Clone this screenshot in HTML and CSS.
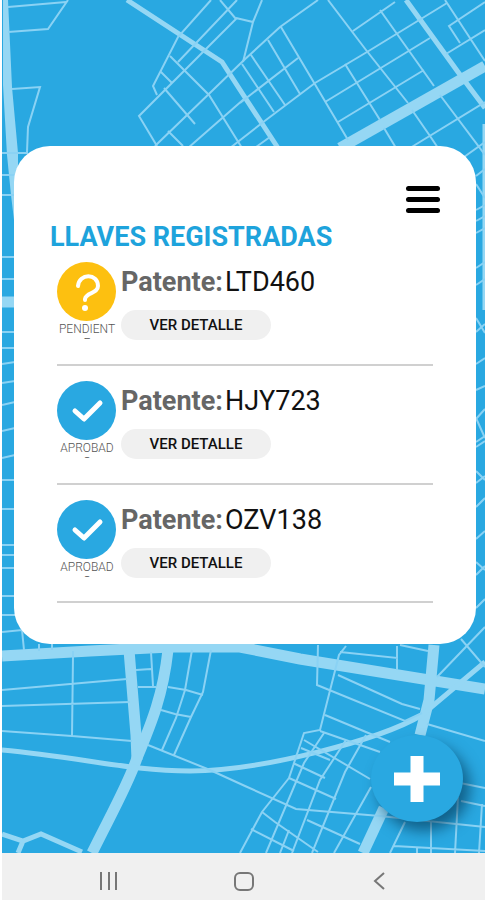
FILE: index.html
```html
<!DOCTYPE html>
<html lang="es">
<head>
  <meta charset="UTF-8">
  <meta name="viewport" content="width=device-width, initial-scale=1.0">
  <title>Llaves registradas</title>
  <link rel="stylesheet" href="styles.css">
</head>
<body>

<main class="screen">
  <svg class="map" viewBox="2 0 483 853" preserveAspectRatio="xMidYMid slice" aria-hidden="true">
    <path class="road-fill" d="M3 0H8L12 87L18 153V240L14 220L11 195L7 155L3 85Z"/>
    <!-- avenues -->
    <g class="avenue">
      <path d="M340 148L485 66"/>
      <path d="M2 656L90 651L170 647L240 647L300 659L485 689"/>
      <path d="M129 650L136 735L137 760"/>
      <path d="M168 650C163 695 152 722 137 758C128 785 108 820 92 853"/>
      <path d="M434 645L429 700L420 735"/>
      <path d="M384 808L363 853"/>
      <path d="M2 302H16"/>
    </g>
    <!-- main streets -->
    <g class="main-street">
      <path d="M127 0L222 62L244 96L278 148"/>
      <path d="M406 0L458 72L485 108"/>
      <path d="M2 750C80 757 130 771 190 771C260 771 380 740 422 715L485 662"/>
      <path d="M2 834L23 841L41 834L82 852M23 841L18 853"/>
      <path d="M485 124V310"/>
    </g>
    <!-- streets -->
    <g class="street">
      <path d="M8 7L66 2M68 0L48 29L8 32M12 89L40 87L28 127L27 152M2 153H28"/>
      <path d="M2 175H15M2 195H15M2 257H15M2 279H15M2 332H15M2 348H15M2 364L15 362M2 383L15 381M2 405L15 402M2 431L15 428M2 458L15 455M2 480H15M2 509H15M2 545H15M2 555H15M2 568H15M2 596H15M2 615H15"/>
      <path d="M211 0L178 37L153 86L157 95M237 0L178 62M220 0L236 19L139 116L157 146M170 56L209 95L242 148M161 72L172 83M164 88L195 124M236 18L253 22L262 0M253 22L243 62"/>
      <path d="M318 0L280 27L243 61L155 146M168 131L183 146M242 64L274 112M251 55L285 105M268 40L300 94M281 27L348 140M244 99L188 148M230 148L262 123L315 83L367 52L447 3M240 103L298 58"/>
      <path d="M256 147L270 137"/>
      <path d="M328 0L366 50L408 103M353 31L395 2M380 10L434 86M345 64L380 120M325 102L430 38M338 122L424 70M445 0L485 61M485 2L449 26L460 43M446 54L485 30"/>
      <path d="M412 110L430 136L438 148M440 95L485 155M384 128L396 148M485 102L410 148M464 157L485 142"/>
      <path d="M476 176L485 169M476 184L485 198M476 210L485 205M476 221L485 216M476 233L485 228M476 268L485 262M476 285L485 279M476 318L485 333M476 332L485 324M476 364L485 358M476 390L485 386M476 419L485 409M476 418L485 438M476 442L485 436M476 447L485 441M476 471L485 480M476 483L485 476M476 507L485 498M476 539L485 531M476 562L485 570M476 575L485 566M476 608L485 599"/>
      <path d="M2 632L22 630L24 650M39 644V651M52 644V650M73 651V656M73 656L72 736M2 690L127 679M2 706L130 702M2 731L72 736L132 741M2 632"/>
      <path d="M151 652L153 686M136 670L151 669M138 687H156M192 650L185 690L176 718L162 750M211 650L203 692L191 717L174 755M168 687L186 690L203 695M161 710L175 714L191 717M148 745L210 770L245 786L296 809L380 816L485 827"/>
      <path d="M318 645L317 685L405 721L422 713M346 646L339 655L320 730L304 733L289 778M340 652L397 658V646M397 658V670M338 675L402 704L420 709M325 715L390 742M320 731L380 752M304 740L370 779M301 748L330 760M293 763L325 778M289 778L336 799M289 778L262 812L240 853M324 733L304 763L266 853M346 740L320 780L292 853M366 735L345 772L312 853M371 787L334 853M262 812L275 822L318 852M251 829L294 851M289 830L280 853M307 820L360 844"/>
      <path d="M400 645L428 651M437 677L485 627M461 639L485 667M427 724L485 741M460 783L485 788M405 822L390 853M394 846L485 851M431 822V853M458 797L455 853M482 804L479 853M461 801L485 806M417 848V853"/>
    </g>
  </svg>

  <section class="card">
    <button class="menu" type="button" aria-label="Menú"><span></span><span></span><span></span></button>
    <h1 class="title">LLAVES REGISTRADAS</h1>

    <ul class="keys">
      <li class="key">
        <div class="status">
          <svg class="status-icon pending" viewBox="0 0 59 59" aria-hidden="true">
            <circle cx="29.500" cy="29.500" r="29.500"/>
            <path d="M21 24C22 11 41 11 41 24C41 32 29 30 28 37V38"/>
            <circle class="dot" cx="28" cy="46" r="3"/>
          </svg>
          <div class="status-label">PENDIENTE</div>
        </div>
        <div class="info">
          <p class="plate"><b>Patente:</b>LTD460</p>
          <button class="detail" type="button">VER DETALLE</button>
        </div>
      </li>
      <li class="key">
        <div class="status">
          <svg class="status-icon" viewBox="0 0 59 59" aria-hidden="true">
            <circle cx="29.500" cy="29.500" r="29.500"/>
            <path d="M18 30L27 38L43 22"/>
          </svg>
          <div class="status-label">APROBADO</div>
        </div>
        <div class="info">
          <p class="plate"><b>Patente:</b>HJY723</p>
          <button class="detail" type="button">VER DETALLE</button>
        </div>
      </li>
      <li class="key">
        <div class="status">
          <svg class="status-icon" viewBox="0 0 59 59" aria-hidden="true">
            <circle cx="29.500" cy="29.500" r="29.500"/>
            <path d="M18 30L27 38L43 22"/>
          </svg>
          <div class="status-label">APROBADO</div>
        </div>
        <div class="info">
          <p class="plate"><b>Patente:</b>OZV138</p>
          <button class="detail" type="button">VER DETALLE</button>
        </div>
      </li>
    </ul>
  </section>

  <button class="add" type="button" aria-label="Agregar llave">
    <svg viewBox="0 0 46 46" aria-hidden="true"><path d="M23 0V46M0 23H46"/></svg>
  </button>
</main>

<nav class="navbar">
  <button type="button" aria-label="Recientes">
    <svg viewBox="0 0 20 20"><path d="M2 1V19M10 1V19M17 1V19"/></svg>
  </button>
  <button type="button" aria-label="Inicio">
    <svg viewBox="0 0 20 20"><rect x="1" y="2" width="18" height="17" rx="5"/></svg>
  </button>
  <button type="button" aria-label="Atrás">
    <svg viewBox="0 0 20 20"><path d="M15 2L6 10L15 18"/></svg>
  </button>
</nav>

</body>
</html>
```
FILE: styles.css
```css
* {
  box-sizing: border-box;
}

body {
  margin: 0;
  padding-left: 2px;
  min-height: 100vh;
  display: flex;
  flex-direction: column;
  background: #fff;
  font-family: Roboto, sans-serif;
}

button {
  border: 0;
  padding: 0;
  background: none;
  font-family: inherit;
  cursor: pointer;
}

.screen {
  position: relative;
  flex: 1;
  padding: 146px 9px 208px 12px;
  background: #29a8e1;
  overflow: hidden;
}

/* street map behind the card */
.map {
  position: absolute;
  top: 0;
  left: 0;
  width: 100%;
  height: 100%;
  fill: none;
  stroke: #95d7f4;
}

.road-fill {
  fill: #95d7f4;
  stroke: none;
}

.avenue {
  stroke-width: 11;
}

.main-street {
  stroke-width: 5;
}

.street {
  stroke: #8ad2f4;
  stroke-width: 2;
}

.card {
  position: relative;
  padding: 37px 36px 41px;
  background: #fff;
  border-radius: 36px;
}

.menu {
  display: flex;
  flex-direction: column;
  gap: 6px;
  width: 34px;
  margin-left: auto;
  padding: 3px 0;
}

.menu span {
  width: 100%;
  height: 5px;
  border-radius: 3px;
  background: #000;
}

.title {
  margin: 4px 0 8px;
  font-size: 27px;
  line-height: 34px;
  font-weight: 700;
  color: #1ea3dc;
}

.keys {
  list-style: none;
  margin: 0;
  padding: 0 7px;
}

.key {
  display: flex;
  gap: 4px;
  height: 104px;
  margin-bottom: 15px;
  border-bottom: 2px solid #d0d0d0;
}

.key:last-child {
  height: 103px;
  margin-bottom: 0;
}

.status {
  width: 60px;
}

.status-icon {
  display: block;
  width: 59px;
  height: 59px;
  fill: #29a8e1;
}

.status-icon path {
  fill: none;
  stroke: #fff;
  stroke-width: 5;
  stroke-linecap: round;
  stroke-linejoin: round;
}

.status-icon.pending {
  fill: #fdc010;
}

.status-icon.pending path {
  stroke-width: 4;
}

.status-icon .dot {
  fill: #fff;
}

/* the second line is cut off on purpose */
.status-label {
  height: 17px;
  margin-top: 1px;
  overflow: hidden;
  font-size: 12px;
  line-height: 14px;
  font-weight: 300;
  text-align: center;
  word-break: break-all;
  color: #555;
}

.plate {
  margin: 4px 0 12px;
  font-size: 27px;
  line-height: 32px;
  color: #111;
}

.plate b {
  margin-right: 2px;
  color: #666;
}

.detail {
  display: block;
  width: 150px;
  height: 30px;
  border-radius: 15px;
  background: #f0f0f0;
  font-size: 15px;
  font-weight: 500;
  color: #111;
}

.add {
  position: absolute;
  right: 22px;
  bottom: 31px;
  width: 92px;
  height: 87px;
  border-radius: 50%;
  background: #29a8e1;
  box-shadow: 7px 9px 14px rgba(0, 50, 80, 0.6);
}

.add svg {
  display: block;
  width: 46px;
  height: 46px;
  margin: auto;
  stroke: #fff;
  stroke-width: 13;
}

.navbar {
  display: flex;
  justify-content: space-around;
  align-items: center;
  height: 47px;
  padding: 9px 39px 0;
  background: #f0f0f0;
}

.navbar svg {
  display: block;
  width: 20px;
  height: 20px;
  fill: none;
  stroke: #777;
  stroke-width: 2;
}
```
